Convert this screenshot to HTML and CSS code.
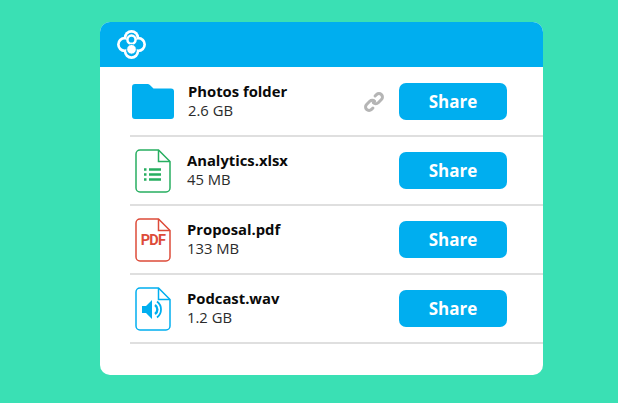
FILE: index.html
```html
<!DOCTYPE html>
<html lang="en">
<head>
    <meta charset="UTF-8">
    <title>Shared files</title>
    <link rel="stylesheet" href="styles.css">
</head>
<body>
    <div class="card">
        <div class="card-header">
            <svg class="logo" width="29" height="29" viewBox="0 0 30 30">
                <g fill="#fff">
                    <circle cx="15" cy="8" r="8"/>
                    <circle cx="8" cy="15" r="8"/>
                    <circle cx="22" cy="15" r="8"/>
                    <circle cx="15" cy="22" r="8"/>
                </g>
                <g fill="#00aeef">
                    <circle cx="15" cy="8" r="5.200"/>
                    <circle cx="8" cy="15" r="5.200"/>
                    <circle cx="22" cy="15" r="5.200"/>
                    <circle cx="15" cy="22" r="5.200"/>
                </g>
                <circle cx="15" cy="10" r="4.200" fill="#00aeef" stroke="#fff" stroke-width="2.600"/>
                <circle cx="15" cy="20" r="5" fill="#fff" stroke="#00aeef" stroke-width="1"/>
            </svg>
        </div>
        <div class="row">
            <div class="row-icon">
                <svg width="42" height="35" viewBox="0 0 42 35">
                    <path d="M3 0h12.500c1 0 1.700.4 2.400 1l3.600 3.500h17.500a3 3 0 0 1 3 3V32a3 3 0 0 1-3 3H3a3 3 0 0 1-3-3V3a3 3 0 0 1 3-3z" fill="#00aeef"/>
                </svg>
            </div>
            <div class="row-info row-info-folder">
                <div class="file-name">Photos folder</div>
                <div class="file-size">2.6 GB</div>
            </div>
            <svg class="link-icon" width="20" height="20" viewBox="0 0 20 20" fill="none" stroke="#b5b5b5" stroke-width="3" stroke-linecap="round">
                <g transform="rotate(-45 10 10)">
                    <path d="M11 10a3.500 3.500 0 0 0-3.500-3.500H3a3.500 3.500 0 0 0 0 7h2"/>
                    <path d="M9 10a3.500 3.500 0 0 0 3.500 3.500H17a3.500 3.500 0 0 0 0-7h-2"/>
                </g>
            </svg>
            <button class="share-btn">Share</button>
        </div>
        <div class="row">
            <div class="row-icon">
                <svg width="36" height="44" viewBox="0 0 36 44" fill="none">
                    <path d="M23.500 1H5a4 4 0 0 0-4 4v34a4 4 0 0 0 4 4h26a4 4 0 0 0 4-4V12.500z" stroke="#27ae60" stroke-width="1.500"/>
                    <path d="M23.500 1v11.500H35" stroke="#27ae60" stroke-width="1.500"/>
                    <path d="M9 20.500h2.500M14 20.500h12M9 25.500h2.500M14 25.500h12M9 30.500h2.500M14 30.500h12" stroke="#27ae60" stroke-width="2.400"/>
                </svg>
            </div>
            <div class="row-info">
                <div class="file-name">Analytics.xlsx</div>
                <div class="file-size">45 MB</div>
            </div>
            <button class="share-btn">Share</button>
        </div>
        <div class="row">
            <div class="row-icon">
                <svg width="36" height="44" viewBox="0 0 36 44" fill="none">
                    <path d="M23.500 1H5a4 4 0 0 0-4 4v34a4 4 0 0 0 4 4h26a4 4 0 0 0 4-4V12.500z" stroke="#dd4b39" stroke-width="1.500"/>
                    <path d="M23.500 1v11.500H35" stroke="#dd4b39" stroke-width="1.500"/>
                </svg>
                <span class="pdf-label">PDF</span>
            </div>
            <div class="row-info">
                <div class="file-name">Proposal.pdf</div>
                <div class="file-size">133 MB</div>
            </div>
            <button class="share-btn">Share</button>
        </div>
        <div class="row">
            <div class="row-icon">
                <svg width="36" height="44" viewBox="0 0 36 44" fill="none">
                    <path d="M23.500 1H5a4 4 0 0 0-4 4v34a4 4 0 0 0 4 4h26a4 4 0 0 0 4-4V12.500z" stroke="#00aeef" stroke-width="1.500"/>
                    <path d="M23.500 1v11.500H35" stroke="#00aeef" stroke-width="1.500"/>
                    <path d="M7 19h4l6-6v19l-6-6H7z" fill="#00aeef"/>
                    <path d="M20 18a5.500 5.500 0 0 1 0 9" stroke="#00aeef" stroke-width="2.400"/>
                    <path d="M22 14.500a10 10 0 0 1 0 16" stroke="#00aeef" stroke-width="1.800"/>
                </svg>
            </div>
            <div class="row-info">
                <div class="file-name">Podcast.wav</div>
                <div class="file-size">1.2 GB</div>
            </div>
            <button class="share-btn">Share</button>
        </div>
    </div>
</body>
</html>
```

FILE: styles.css
```css
html, body {
    height: 100%;
}
body {
    margin: 0;
    padding: 22px 0 0 100px;
    box-sizing: border-box;
    overflow: hidden;
    background-color: #3ae0b4;
    font-family: "Open Sans", sans-serif;
    color: #1a1a1a;
}
.card {
    width: 443px;
    height: 353px;
    background-color: #ffffff;
    border-radius: 10px;
    overflow: hidden;
}
.card-header {
    display: flex;
    align-items: center;
    height: 45px;
    padding-left: 17px;
    background-color: #00aeef;
}
.logo {
    display: block;
}
.row {
    display: flex;
    align-items: center;
    height: 67px;
    margin-left: 30px;
    padding-right: 36px;
    border-bottom: 2px solid #dfdfdf;
}
.row:nth-child(2) {
    margin-top: 1px;
}
.row-icon {
    position: relative;
    display: flex;
    justify-content: center;
    width: 46px;
    margin-right: 11px;
}
.row-info {
    flex: 1;
    padding-bottom: 2px;
}
.row-info-folder {
    margin-left: 1px;
}
.file-name {
    font-size: 14.800px;
    font-weight: 700;
    line-height: 20px;
    color: #0a0a0a;
}
.file-size {
    font-size: 14.800px;
    line-height: 19px;
    color: #2b2b2b;
}
.link-icon {
    margin-right: 15px;
}
.share-btn {
    width: 108px;
    height: 37px;
    border: none;
    border-radius: 7px;
    background-color: #00aeef;
    color: #ffffff;
    font-family: inherit;
    font-size: 17px;
    font-weight: 700;
}
.pdf-label {
    position: absolute;
    left: 0;
    right: 0;
    top: 14px;
    text-align: center;
    font-family: Roboto, sans-serif;
    font-size: 14.500px;
    font-weight: 700;
    letter-spacing: -0.8px;
    color: #dd4b39;
}
```
